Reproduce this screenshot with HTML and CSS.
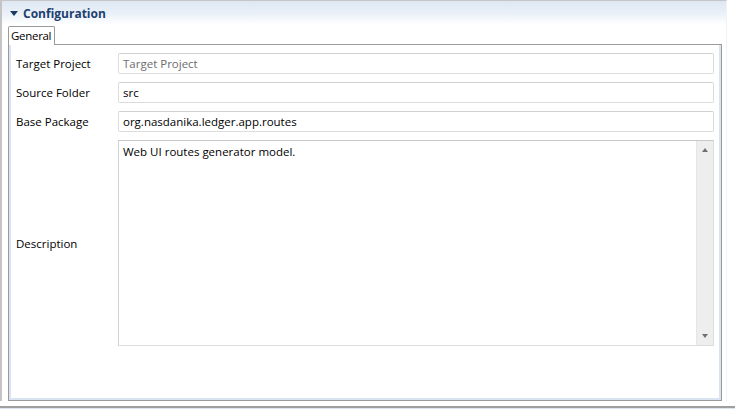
FILE: index.html
```html
<!DOCTYPE html>
<html>
<head>
<meta charset="utf-8">
<link rel="stylesheet" href="styles.css">
</head>
<body>
<div class="view">
  <div class="section-header">
    <span class="twisty"></span>
    <span class="section-title">Configuration</span>
  </div>
  <div class="tabfolder">
    <div class="tabrow">
      <div class="tab">General</div>
      <div class="tabfill"></div>
    </div>
    <div class="tabbody">
      <div class="form">
        <label class="lbl">Target Project</label>
        <div class="field placeholder">Target Project</div>
        <label class="lbl">Source Folder</label>
        <div class="field">src</div>
        <label class="lbl">Base Package</label>
        <div class="field">org.nasdanika.ledger.app.routes</div>
        <label class="lbl">Description</label>
        <div class="area">
          <div class="area-text">Web UI routes generator model.</div>
          <div class="scrollbar">
            <span class="arrow up"></span>
            <span class="arrow down"></span>
          </div>
        </div>
      </div>
    </div>
  </div>
</div>
<div class="footer-line"></div>
</body>
</html>
```
FILE: styles.css
```css
html, body {
  margin: 0;
  padding: 0;
  width: 735px;
  height: 409px;
  overflow: hidden;
  background: #ffffff;
  font-family: "Open Sans", "Noto Sans", sans-serif;
  font-size: 11.5px;
  color: #000;
}
.view {
  height: 401px;
  width: 727px;
  box-sizing: border-box;
  border-left: 2px solid #c4c4c4;
  border-top: 1px solid #c6c6c6;
  border-right: 1px solid #eef3f9;
}
.section-header {
  height: 24px;
  display: flex;
  align-items: center;
  background: linear-gradient(to bottom, #dde7f3 0%, #eaf0f8 50%, #ffffff 100%);
}
.twisty {
  width: 0;
  height: 0;
  margin-left: 8px;
  margin-right: 5px;
  border-left: 4px solid transparent;
  border-right: 4px solid transparent;
  border-top: 5px solid #1b3a64;
}
.section-title {
  font-weight: bold;
  color: #1c4170;
  font-size: 12px;
}
.tabfolder {
  margin: 1px 4px 0 6px;
  height: 375px;
  display: flex;
  flex-direction: column;
}
.tabrow {
  display: flex;
  height: 19px;
}
.tab {
  box-sizing: border-box;
  border: 1px solid #9a9a9a;
  border-bottom: none;
  border-radius: 2px 2px 0 0;
  padding: 1px 3px 0 2px;
  letter-spacing: -0.3px;
  background: #fff;
  height: 19px;
}
.tabfill {
  flex: 1;
  border-bottom: 1px solid #9a9a9a;
  height: 18px;
  align-self: flex-end;
  box-sizing: border-box;
}
.tabbody {
  flex: 1;
  border: 1px solid #9a9a9a;
  border-top: none;
  box-shadow: inset 2px -2px 0 #d8e4f2, inset -2px 0 0 #d8e4f2;
  padding: 8px 7px 0 7px;
}
.form {
  display: grid;
  grid-template-columns: 102px 596px;
  grid-template-rows: 21px 21px 21px 206px;
  row-gap: 8px;
  align-items: center;
}
.field {
  height: 21px;
  box-sizing: border-box;
  border: 1px solid #dcdcdc;
  border-top-color: #d0d0d0;
  border-radius: 2px;
  padding: 2px 0 0 4px;
  white-space: nowrap;
}
.placeholder {
  color: #6d6d6d;
}
.area {
  height: 206px;
  box-sizing: border-box;
  border: 1px solid #dcdcdc;
  border-top-color: #c8c8c8;
  border-left-color: #d3d3d3;
  display: flex;
}
.area-text {
  flex: 1;
  padding: 3px 0 0 4px;
}
.scrollbar {
  width: 16px;
  background: #eeeeee;
  border-left: 1px solid #e6e6e6;
  position: relative;
}
.arrow {
  position: absolute;
  left: 5px;
  width: 0;
  height: 0;
  border-left: 3.5px solid transparent;
  border-right: 3.5px solid transparent;
}
.arrow.up {
  top: 7px;
  border-bottom: 4px solid #707070;
}
.arrow.down {
  bottom: 7px;
  border-top: 4px solid #707070;
}
.footer-line {
  margin-top: 5px;
  height: 1px;
  border-top: 2px solid #9f9f9f;
  background: #dbe6f2;
}
```
